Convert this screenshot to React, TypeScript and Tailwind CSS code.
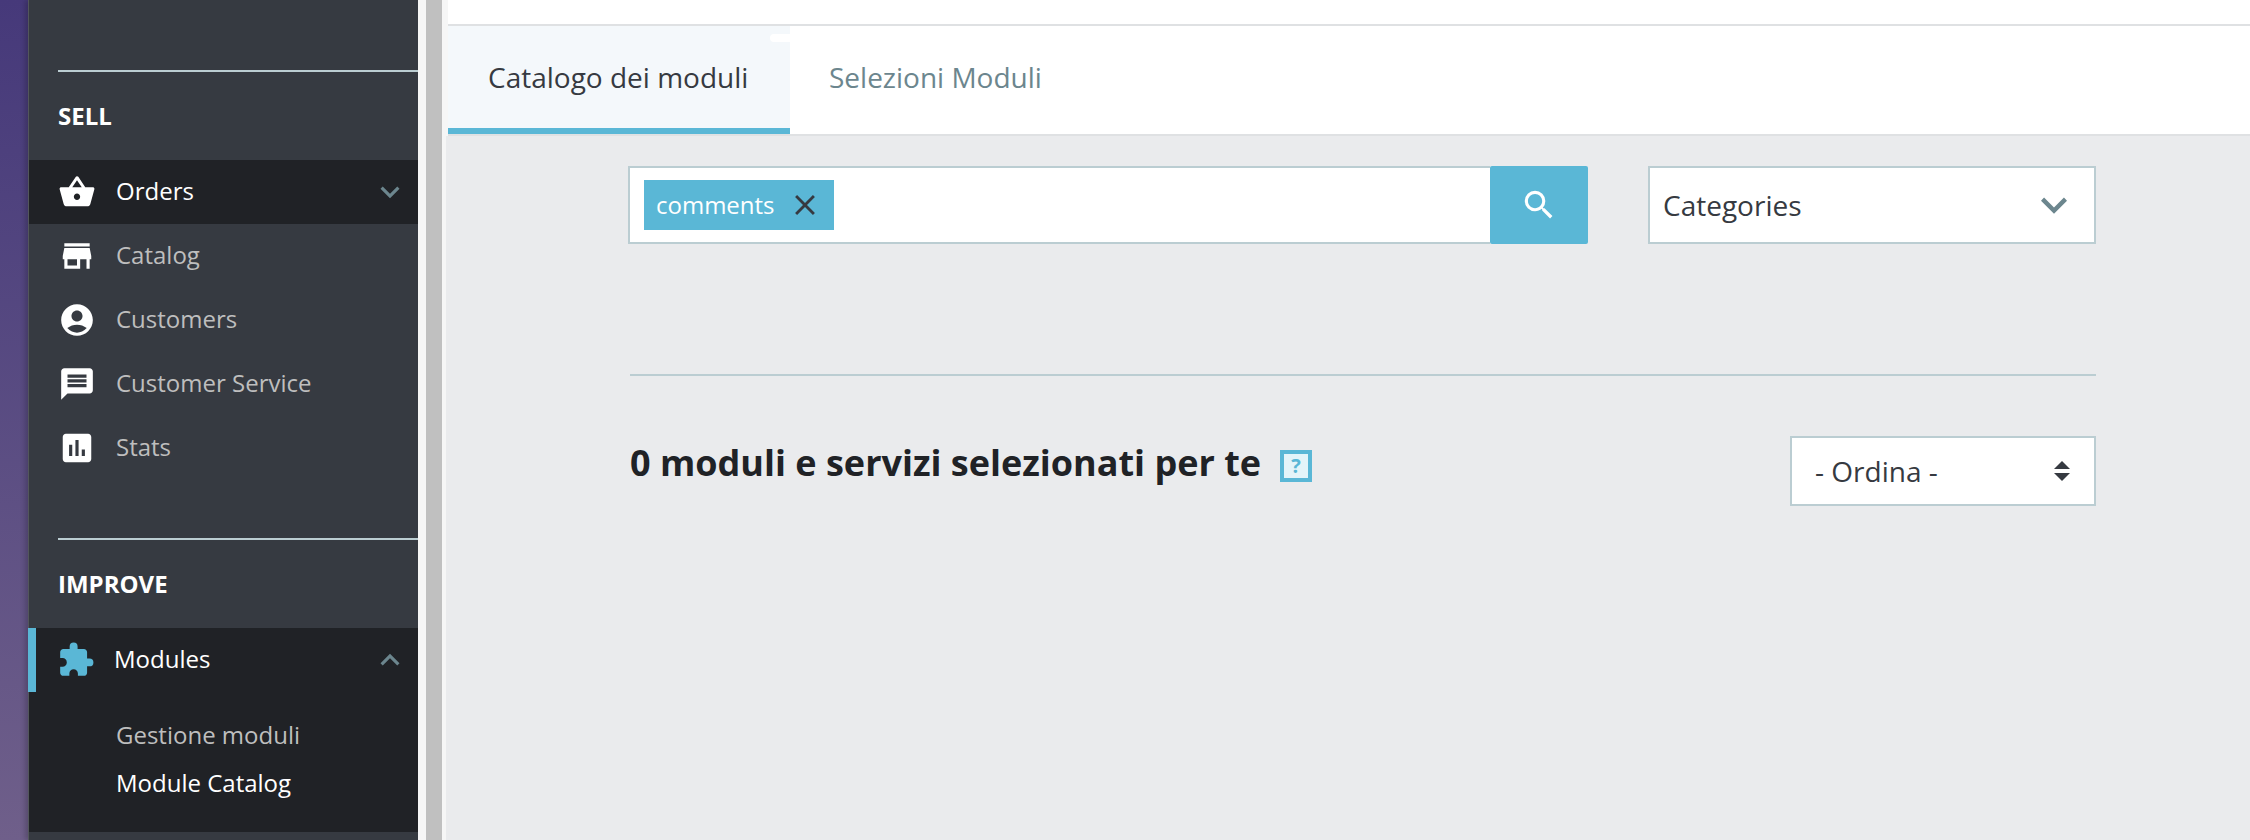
import React from "react";
import {
  MdShoppingBasket,
  MdStore,
  MdAccountCircle,
  MdMessage,
  MdAssessment,
  MdExtension,
  MdExpandMore,
  MdExpandLess,
  MdSearch,
  MdClose,
} from "react-icons/md";

function NavRow({ icon, label }: { icon: React.ReactNode; label: string }) {
  return (
    <div className="flex h-[64px] items-center pl-[29px] text-[#bebebe]">
      <span className="flex w-[38px] justify-center text-white">{icon}</span>
      <span className="ml-[20px] pb-[2px]">{label}</span>
    </div>
  );
}

function SectionHead({ label }: { label: string }) {
  return (
    <div>
      <div className="ml-[29px] h-[2px] bg-[#bbcdd2]" />
      <div className="flex h-[88px] items-center pl-[29px] text-[24px] font-bold text-white">{label}</div>
    </div>
  );
}

export default function App() {
  return (
    <div
      className="flex h-[840px] w-[2250px] overflow-hidden bg-white text-[#363a41]"
      style={{ fontFamily: '"Open Sans", sans-serif' }}
    >
      <div className="h-full w-[28px] bg-gradient-to-b from-[#46397a] to-[#6f5f8a]" />

      <aside className="h-full w-[390px] border-l border-[#53565c] bg-[#363a41] pt-[70px] text-[24px] shadow-[-3px_0_5px_rgba(0,0,0,0.2)]">
        <SectionHead label="SELL" />
        <div className="flex h-[64px] items-center bg-[#202226] pl-[29px] text-white">
          <span className="flex w-[38px] justify-center">
            <MdShoppingBasket size={38} />
          </span>
          <span className="ml-[20px] pb-[2px]">Orders</span>
          <MdExpandMore size={38} className="ml-auto mr-[9px] text-[#6c868e]" />
        </div>
        <NavRow icon={<MdStore size={38} />} label="Catalog" />
        <NavRow icon={<MdAccountCircle size={38} />} label="Customers" />
        <NavRow icon={<MdMessage size={38} />} label="Customer Service" />
        <NavRow icon={<MdAssessment size={38} />} label="Stats" />
        <div className="h-[58px]" />
        <SectionHead label="IMPROVE" />
        <div className="h-[204px] bg-[#202226]">
          <div className="-ml-px flex h-[64px] items-center border-l-[8px] border-[#5ab7d6] pl-[21px] text-white">
            <span className="flex w-[38px] justify-center text-[#5ab7d6]">
              <MdExtension size={40} />
            </span>
            <span className="ml-[19px] pb-[2px]">Modules</span>
            <MdExpandLess size={38} className="ml-auto mr-[9px] text-[#6c868e]" />
          </div>
          <div className="pt-[19px] pl-[87px]">
            <div className="flex h-[48px] items-center text-[#bebebe]">Gestione moduli</div>
            <div className="flex h-[48px] items-center text-white">Module Catalog</div>
          </div>
        </div>
      </aside>

      <div className="h-full w-[8px] bg-[#f6f6f6]" />
      <div className="h-full w-[16px] bg-[#c0c0c0]" />
      <div className="h-full w-[4px] bg-[#f6f6f6]" />

      <main className="flex h-full flex-1 flex-col bg-[#eaebed]">
        <div className="border-l-2 border-[#f6f6f6] bg-white">
          <div className="h-[24px]" />
          <div className="flex h-[112px] border-y-2 border-[#dfe1e3] bg-white">
            <div className="relative flex h-[108px] w-[342px] items-center border-b-[6px] border-[#5ab7d6] bg-[#f4f8fb] pl-[40px] text-[28px] text-[#363a41]">
              Catalogo dei moduli
              <span className="absolute right-0 top-[8px] h-[8px] w-[20px] rounded-l-full bg-white" />
            </div>
            <div className="flex items-center pb-[6px] pl-[39px] text-[28px] text-[#6c868e]">Selezioni Moduli</div>
          </div>
        </div>

        <div className="pl-[182px] pt-[30px]">
          <div className="flex h-[78px] w-[1468px]">
            <div className="flex h-full w-[862px] items-center border-2 border-r-0 border-[#bbcdd2] bg-white pl-[14px]">
              <div className="flex h-[50px] w-[190px] items-center bg-[#5ab7d6] pl-[12px] text-[24px] text-white">
                comments
                <MdClose size={34} className="ml-[13px] text-[#363a41]" />
              </div>
            </div>
            <div className="flex h-full w-[98px] items-center justify-center rounded-[2px] bg-[#5ab7d6] text-white">
              <MdSearch size={38} />
            </div>
            <div className="ml-[60px] flex h-full w-[448px] items-center border-2 border-[#bbcdd2] bg-white pl-[13px] pr-[14px] text-[28px]">
              Categories
              <MdExpandMore size={52} className="ml-auto text-[#6c868e]" />
            </div>
          </div>

          <div className="ml-[2px] mt-[130px] h-[2px] w-[1466px] bg-[#bbcdd2]" />

          <div className="ml-[2px] mt-[60px] flex w-[1466px] items-start justify-between">
            <div className="mt-[2px] flex items-start text-[36px] font-bold leading-[50px] text-[#202226]">
              <span>0 moduli e servizi selezionati per te</span>
              <span className="ml-[19px] mt-[12px] flex h-[32px] w-[32px] items-center justify-center border-[4px] border-[#5ab7d6] bg-[#e4f4f9] text-[20px] leading-none text-[#5ab7d6]">
                ?
              </span>
            </div>
            <div className="flex h-[70px] w-[306px] items-center border-2 border-[#bbcdd2] bg-white pl-[23px] pr-[24px] text-[28px]">
              - Ordina -
              <svg className="ml-auto" width="16" height="20" viewBox="0 0 16 20" fill="#363a41">
                <path d="M8 0 16 8H0Z" />
                <path d="M0 12H16L8 20Z" />
              </svg>
            </div>
          </div>
        </div>
      </main>
    </div>
  );
}
